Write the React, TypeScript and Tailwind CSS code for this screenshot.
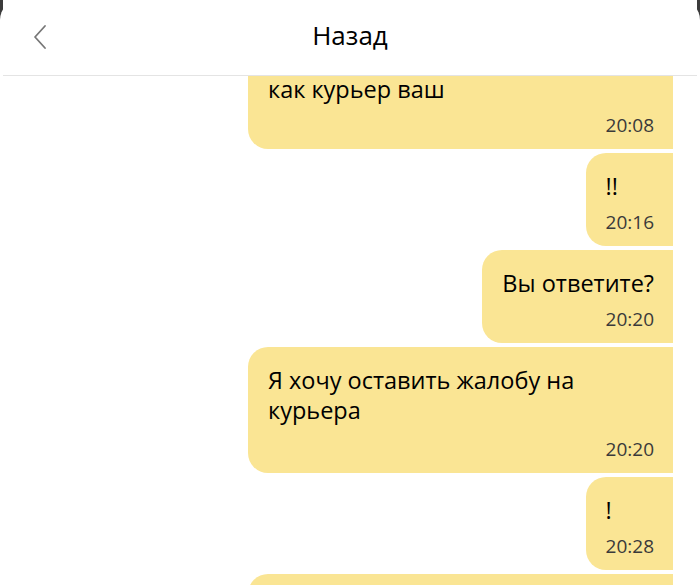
import React from 'react';

type Msg = { id: number; lines: string[]; time: string; wide?: boolean };

const messages: Msg[] = [
  { id: 1, lines: ['как курьер ваш'], time: '20:08', wide: true },
  { id: 2, lines: ['!!'], time: '20:16' },
  { id: 3, lines: ['Вы ответите?'], time: '20:20' },
  { id: 4, lines: ['Я хочу оставить жалобу на', 'курьера'], time: '20:20', wide: true },
  { id: 5, lines: ['!'], time: '20:28' },
];

function Bubble({ msg }: { msg: Msg }) {
  return (
    <div
      className={`bg-[#fae594] rounded-l-[20px] pl-5 pr-[19px] pt-[18px] pb-3 flex flex-col ${
        msg.wide ? 'w-[425px]' : ''
      }`}
    >
      <div className="text-[23.5px] leading-[30px] text-black">
        {msg.lines.map((l) => (
          <div key={l}>{l}</div>
        ))}
      </div>
      <div
        className={`text-[19px] leading-6 text-[#3a3a3a] self-end ${
          msg.lines.length > 1 ? 'mt-[12px]' : 'mt-[9px]'
        }`}
      >
        {msg.time}
      </div>
    </div>
  );
}

export default function App() {
  return (
    <div
      className="w-[700px] h-[585px] bg-[#3b3b3b] overflow-hidden"
      style={{ fontFamily: '"Open Sans", "Noto Sans", sans-serif' }}
    >
      <div className="h-full bg-white rounded-t-[20px] flex flex-col">
        <header className="h-[76px] shrink-0 flex items-center pb-1 relative border-b border-[#e4e4e4] mx-[3px] z-10 bg-white">
          <svg
            width="16"
            height="26"
            viewBox="0 0 16 26"
            className="absolute left-[29px] top-[24px]"
            fill="none"
            stroke="#777"
            strokeWidth="1.8"
            strokeLinecap="round"
            strokeLinejoin="round"
          >
            <path d="M13 2 L3 13 L13 24" />
          </svg>
          <h1 className="w-full text-center text-[26px] text-black">Назад</h1>
        </header>
        <div className="flex-1 overflow-hidden">
          <div className="flex flex-col items-end gap-1 pr-[27px] -mt-[20px]">
            {messages.map((m) => (
              <Bubble key={m.id} msg={m} />
            ))}
            {/* next message, scrolled below the fold */}
            <div className="bg-[#fae594] rounded-l-[20px] w-[425px] h-[100px]" />
          </div>
        </div>
      </div>
    </div>
  );
}
